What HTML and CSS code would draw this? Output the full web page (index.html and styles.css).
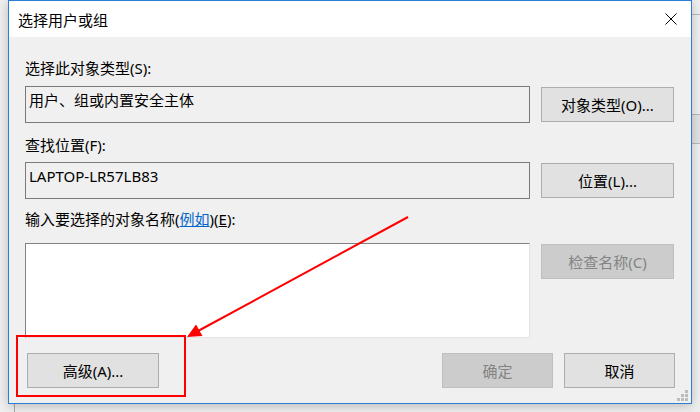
FILE: index.html
```html
<!DOCTYPE html>
<html lang="zh-CN">
<head>
<meta charset="utf-8">
<title>选择用户或组</title>
<link rel="stylesheet" href="styles.css">
</head>
<body>
<div class="window">
  <div class="titlebar">
    <span class="title">选择用户或组</span>
    <svg class="close" width="12" height="12" viewBox="0 0 12 12"><path d="M0.5 0.5L11.5 11.5M11.5 0.5L0.5 11.5" stroke="#000" stroke-width="1" fill="none"/></svg>
  </div>
  <div class="content">
    <div class="label first">选择此对象类型(S):</div>
    <div class="row">
      <div class="textbox">用户、组或内置安全主体</div>
      <div class="btn">对象类型(O)...</div>
    </div>
    <div class="label second">查找位置(F):</div>
    <div class="row row2">
      <div class="textbox">LAPTOP-LR57LB83</div>
      <div class="btn">位置(L)...</div>
    </div>
    <div class="label third">输入要选择的对象名称(<span class="link">例如</span>)(<u>E</u>):</div>
    <div class="row row3">
      <div class="textarea"></div>
      <div class="btn disabled">检查名称(C)</div>
    </div>
    <div class="footer">
      <div class="btn adv">高级(A)...</div>
      <div class="footer-right">
        <div class="btn small disabled">确定</div>
        <div class="btn small">取消</div>
      </div>
    </div>
  </div>
  <svg class="grip" width="12" height="12" viewBox="0 0 12 12">
    <rect x="8" y="0" width="3" height="3" fill="#bcbcbc"/>
    <rect x="4" y="4" width="3" height="3" fill="#bcbcbc"/>
    <rect x="8" y="4" width="3" height="3" fill="#bcbcbc"/>
    <rect x="0" y="8" width="3" height="3" fill="#bcbcbc"/>
    <rect x="4" y="8" width="3" height="3" fill="#bcbcbc"/>
    <rect x="8" y="8" width="3" height="3" fill="#bcbcbc"/>
  </svg>
</div>
<svg class="annotation" width="700" height="412" viewBox="0 0 700 412">
  <rect x="17" y="336" width="168" height="60" fill="none" stroke="#ff0000" stroke-width="2"/>
  <line x1="408" y1="217" x2="198" y2="331" stroke="#ff0000" stroke-width="2"/>
  <polygon points="187,337 196,324.5 202.5,336" fill="#ff0000"/>
</svg>
</body>
</html>
```
FILE: styles.css
```css
html, body {
  margin: 0;
  padding: 0;
}
body {
  width: 700px;
  height: 412px;
  overflow: hidden;
  position: relative;
  font-family: "Segoe UI", "Noto Sans", "Noto Sans CJK SC", sans-serif;
  font-size: 15px;
  color: #000;
  background:
    linear-gradient(#b9b9b9, #b9b9b9) right 0 top 14px / 9px 1px no-repeat,
    linear-gradient(#b9b9b9, #b9b9b9) right 0 top 114px / 9px 1px no-repeat,
    linear-gradient(#b9b9b9, #b9b9b9) right 0 top 143px / 9px 1px no-repeat,
    linear-gradient(#e2e2e2, #e2e2e2) right 0 top 114px / 9px 29px no-repeat,
    linear-gradient(#a8a8a8, #a8a8a8) 14px 404px / 1px 8px no-repeat,
    #efefef;
}
.window {
  position: relative;
  box-sizing: border-box;
  margin-left: 8px;
  width: 684px;
  height: 404px;
  border: 1px solid #2b7fd3;
  background: #f0f0f0;
  box-shadow: 0 2px 10px rgba(0, 0, 0, 0.22);
}
.titlebar {
  height: 36px;
  background: #fff;
  display: flex;
  align-items: center;
  justify-content: space-between;
  padding-left: 9px;
  padding-right: 14px;
}
.title {
  line-height: 20px;
  margin-top: 1px;
}
.close {
  display: block;
  margin-top: -1px;
}
.content {
  padding: 0 16px;
}
.label {
  line-height: 20px;
  height: 20px;
  white-space: nowrap;
}
.label.first { margin-top: 21px; }
.label.second { margin-top: 12px; }
.label.third { margin-top: 10px; }
.link {
  color: #0066cc;
  text-decoration: underline;
}
.row {
  display: grid;
  grid-template-columns: 505px 133px;
  column-gap: 11px;
  align-items: center;
  margin-top: 8px;
}
.row2 { margin-top: 7px; }
.row3 {
  margin-top: 14px;
  align-items: start;
}
.textbox {
  box-sizing: border-box;
  height: 37px;
  border: 1px solid #7a7a7a;
  background: #f0f0f0;
  padding: 3px 3px;
  line-height: 20px;
  white-space: nowrap;
}
.textarea {
  box-sizing: border-box;
  height: 95px;
  background: #fff;
  border-top: 1px solid #828282;
  border-left: 1px solid #828282;
  border-right: 1px solid #e3e3e3;
  border-bottom: 1px solid #e3e3e3;
}
.btn {
  box-sizing: border-box;
  height: 35px;
  border: 1px solid #adadad;
  background: #e1e1e1;
  display: flex;
  align-items: center;
  justify-content: center;
  line-height: 20px;
  white-space: nowrap;
}
.row3 .btn { margin-top: 1px; }
.btn.disabled {
  background: #cccccc;
  border-color: #bfbfbf;
  color: #838383;
}
.footer {
  margin-top: 15px;
  display: flex;
  justify-content: space-between;
}
.btn.adv {
  width: 132px;
  margin-left: 2px;
}
.footer-right {
  display: flex;
  gap: 11px;
}
.btn.small {
  width: 111px;
}
.grip {
  position: absolute;
  right: 2px;
  bottom: 1px;
}
.annotation {
  position: absolute;
  left: 0;
  top: 0;
  pointer-events: none;
}
```
